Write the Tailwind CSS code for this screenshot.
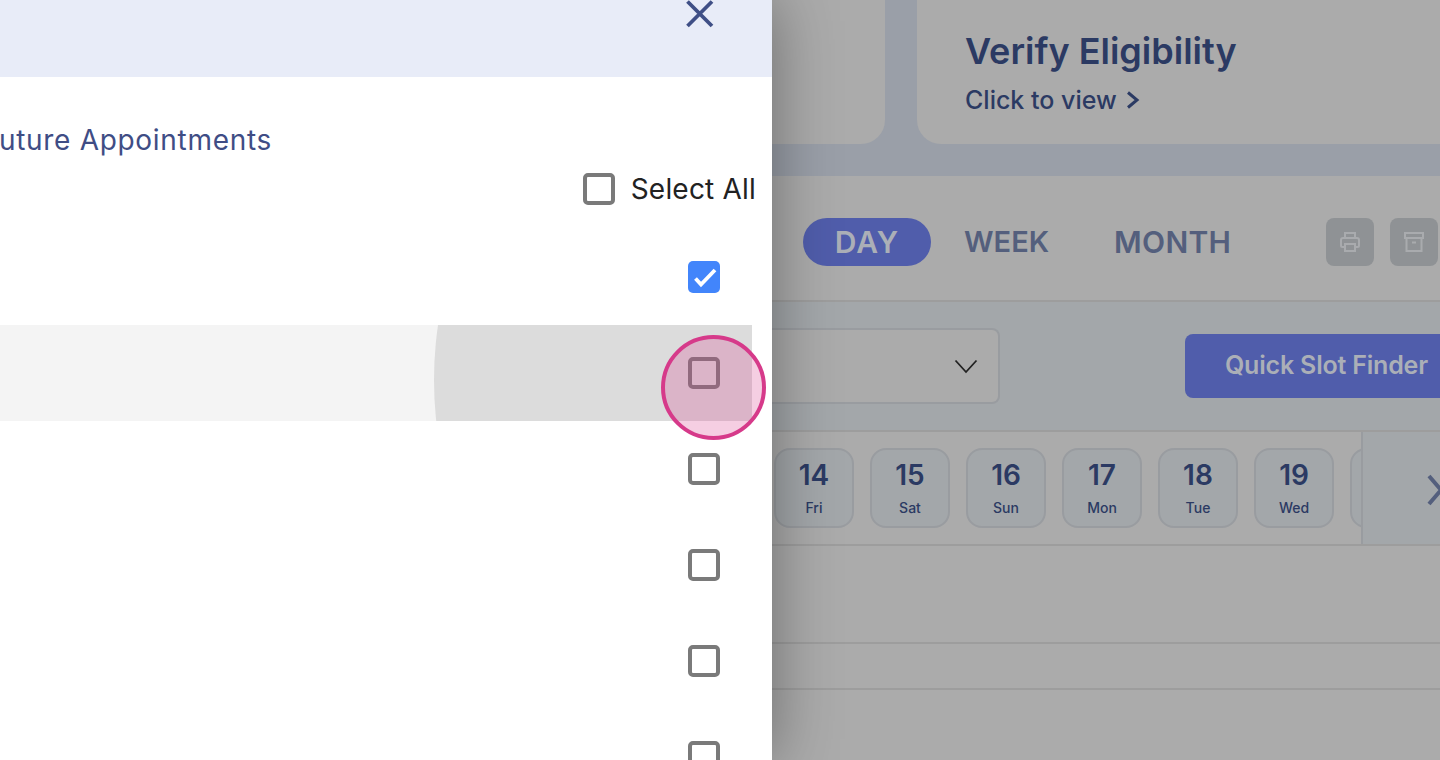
<!DOCTYPE html>
<html lang="en">
<head>
  <meta charset="UTF-8" />
  <title>Appointments</title>
  <script src="https://cdn.jsdelivr.net/npm/@tailwindcss/browser@4"></script>
</head>
<body class="bg-[#ababab] font-['Inter','Noto_Sans',sans-serif] h-[760px] overflow-hidden">
<div class="flex h-[760px] w-[1440px] overflow-hidden">

  <!-- Side panel -->
  <aside class="relative z-10 w-[772px] h-[760px] shrink-0 bg-white overflow-hidden shadow-[0_0_60px_rgba(0,0,0,0.38)]">
    <div class="h-[77px] bg-[#e8ecf8] flex justify-end items-start pr-[56px]">
      <svg class="w-8 h-8 -mt-[2px]" viewBox="0 0 32 32" fill="none" stroke="#3f4f86" stroke-width="3.800"><path d="M3.500 3.500L28 28M28 3.500L3.500 28"/></svg>
    </div>
    <div class="w-[272px] h-[44px] mt-[41px] overflow-hidden flex justify-end items-center">
      <span class="whitespace-nowrap text-[28px] tracking-[0.7px] text-[#3f4d85]">Future Appointments</span>
    </div>
    <div class="flex justify-end items-center gap-4 pr-4 h-[38px] mt-[8px]">
      <span class="w-8 h-8 border-4 border-[#7a7a7a] rounded-[5px]"></span>
      <span class="text-[28px] tracking-[0.2px] text-[#222]">Select All</span>
    </div>
    <div class="w-[752px] mt-[21px]">
      <div class="h-24 flex items-center justify-end pr-8">
        <span class="w-8 h-8 bg-[#4285fb] rounded-[5px]">
          <svg class="w-8 h-8" viewBox="0 0 32 32" fill="none" stroke="#fff" stroke-width="3.800"><path d="M7.500 17.500L13 23.500L27 9"/></svg>
        </span>
      </div>
      <div class="relative h-24 bg-[#f4f4f4] overflow-hidden flex items-center justify-end pr-8">
        <span class="absolute left-[434px] top-[-323px] w-[756px] h-[756px] rounded-full bg-[#dcdcdc]"></span>
        <span class="relative w-8 h-8 border-4 border-[#7a7a7a] rounded-[5px]"></span>
      </div>
      <div class="h-24 flex items-center justify-end pr-8"><span class="w-8 h-8 border-4 border-[#7a7a7a] rounded-[5px]"></span></div>
      <div class="h-24 flex items-center justify-end pr-8"><span class="w-8 h-8 border-4 border-[#7a7a7a] rounded-[5px]"></span></div>
      <div class="h-24 flex items-center justify-end pr-8"><span class="w-8 h-8 border-4 border-[#7a7a7a] rounded-[5px]"></span></div>
      <div class="h-24 flex items-center justify-end pr-8"><span class="w-8 h-8 border-4 border-[#7a7a7a] rounded-[5px]"></span></div>
    </div>
    <!-- Touch indicator -->
    <span class="absolute left-[661px] top-[335px] w-[105px] h-[105px] rounded-full border-4 border-[#d63a8a] bg-[#d63a8a]/25"></span>
  </aside>

  <!-- Dimmed page behind -->
  <main class="flex-1 min-w-0 flex flex-col overflow-hidden">
    <div class="h-[176px] bg-[#9a9fa8] pb-8 flex gap-8 shrink-0">
      <div class="w-[113px] h-[144px] bg-[#ababab] rounded-br-[24px]"></div>
      <div class="flex-1 h-[144px] bg-[#ababab] rounded-bl-[24px] pl-12 pt-[28px] text-[#2b3a63]">
        <div class="text-[36px] leading-[46px] font-semibold whitespace-nowrap">Verify Eligibility</div>
        <div class="flex items-center gap-2 text-[25px] leading-[34px] font-medium mt-[9px]">
          Click to view
          <svg class="w-4 h-5" viewBox="0 0 16 20" fill="none" stroke="#2b3a63" stroke-width="3"><path d="M3 2.500L12 10L3 17.500"/></svg>
        </div>
      </div>
    </div>

    <!-- Day / week / month -->
    <div class="h-[126px] shrink-0 border-b-2 border-[#9d9d9d] flex pt-[42px] pl-[31px] items-start">
      <span class="w-[128px] h-12 rounded-full bg-[#505dab] text-[#abafb7] text-[30px] tracking-[1px] font-semibold flex items-center justify-center">DAY</span>
      <span class="ml-[33px] h-12 text-[#545f7d] text-[29px] font-semibold flex items-center">WEEK</span>
      <span class="ml-[65px] h-12 text-[#545f7d] text-[30px] tracking-[0.3px] font-semibold flex items-center">MONTH</span>
      <span class="ml-auto w-12 h-12 rounded-lg bg-[#8f9295] flex items-center justify-center">
        <svg class="w-6 h-6" viewBox="0 0 24 24" fill="none" stroke="#a9abae" stroke-width="2"><path d="M7 8V3h10v5M7 17H4.500A1.500 1.500 0 0 1 3 15.500V10a2 2 0 0 1 2-2h14a2 2 0 0 1 2 2v5.500a1.500 1.500 0 0 1-1.500 1.500H17M7 14h10v7H7z"/></svg>
      </span>
      <span class="ml-4 mr-[2px] w-12 h-12 rounded-lg bg-[#8f9295] flex items-center justify-center">
        <svg class="w-6 h-6" viewBox="0 0 24 24" fill="none" stroke="#a9abae" stroke-width="2"><path d="M3 3h18v5H3zM4.500 8v13h15V8M10 12.500h4"/></svg>
      </span>
    </div>

    <!-- Provider select + finder -->
    <div class="h-[130px] shrink-0 bg-[#a3a7aa] border-b-2 border-[#9d9d9d] flex items-start overflow-hidden">
      <div class="mt-[26px] w-[228px] shrink-0 h-[76px] bg-[#ababab] border-2 border-l-0 border-[#999ca0] rounded-r-lg flex items-center justify-end pr-5">
        <svg class="w-6 h-4" viewBox="0 0 24 16" fill="none" stroke="#222" stroke-width="1.800"><path d="M1.500 2.500L12 14L22.500 2.500"/></svg>
      </div>
      <div class="mt-[32px] ml-[185px] h-16 pl-10 w-[300px] shrink-0 rounded-lg bg-[#505dab] text-[#abafb7] text-[25px] tracking-[-0.2px] font-semibold flex items-center whitespace-nowrap">Quick Slot Finder</div>
    </div>

    <!-- Date strip -->
    <div class="h-[114px] shrink-0 border-b-2 border-[#9d9d9d] flex">
      <div class="w-[589px] shrink-0 overflow-hidden flex gap-4 pl-[2px] pt-4">
        <div class="w-20 h-20 shrink-0 rounded-2xl border-2 border-[#999ca0] bg-[#a3a7aa] flex flex-col items-center text-[#2b3a63]"><span class="text-[28px] leading-[38px] mt-[6px] font-semibold">14</span><span class="text-sm leading-5 mt-1 font-medium">Fri</span></div>
        <div class="w-20 h-20 shrink-0 rounded-2xl border-2 border-[#999ca0] bg-[#a3a7aa] flex flex-col items-center text-[#2b3a63]"><span class="text-[28px] leading-[38px] mt-[6px] font-semibold">15</span><span class="text-sm leading-5 mt-1 font-medium">Sat</span></div>
        <div class="w-20 h-20 shrink-0 rounded-2xl border-2 border-[#999ca0] bg-[#a3a7aa] flex flex-col items-center text-[#2b3a63]"><span class="text-[28px] leading-[38px] mt-[6px] font-semibold">16</span><span class="text-sm leading-5 mt-1 font-medium">Sun</span></div>
        <div class="w-20 h-20 shrink-0 rounded-2xl border-2 border-[#999ca0] bg-[#a3a7aa] flex flex-col items-center text-[#2b3a63]"><span class="text-[28px] leading-[38px] mt-[6px] font-semibold">17</span><span class="text-sm leading-5 mt-1 font-medium">Mon</span></div>
        <div class="w-20 h-20 shrink-0 rounded-2xl border-2 border-[#999ca0] bg-[#a3a7aa] flex flex-col items-center text-[#2b3a63]"><span class="text-[28px] leading-[38px] mt-[6px] font-semibold">18</span><span class="text-sm leading-5 mt-1 font-medium">Tue</span></div>
        <div class="w-20 h-20 shrink-0 rounded-2xl border-2 border-[#999ca0] bg-[#a3a7aa] flex flex-col items-center text-[#2b3a63]"><span class="text-[28px] leading-[38px] mt-[6px] font-semibold">19</span><span class="text-sm leading-5 mt-1 font-medium">Wed</span></div>
        <div class="w-20 h-20 shrink-0 rounded-2xl border-2 border-[#999ca0] bg-[#a3a7aa]"></div>
      </div>
      <div class="flex-1 bg-[#a3a7aa] border-l-2 border-[#999ca0] pl-[64px] pt-[42px] overflow-hidden">
        <svg class="w-6 h-8 shrink-0" viewBox="0 0 24 32" fill="none" stroke="#545f7d" stroke-width="4"><path d="M2 2L14 16L2 30"/></svg>
      </div>
    </div>

    <!-- Empty grid rows -->
    <div class="h-[98px] shrink-0 border-b-2 border-[#9d9d9d]"></div>
    <div class="h-[46px] shrink-0 border-b-2 border-[#9d9d9d]"></div>
  </main>
</div>
</body>
</html>
